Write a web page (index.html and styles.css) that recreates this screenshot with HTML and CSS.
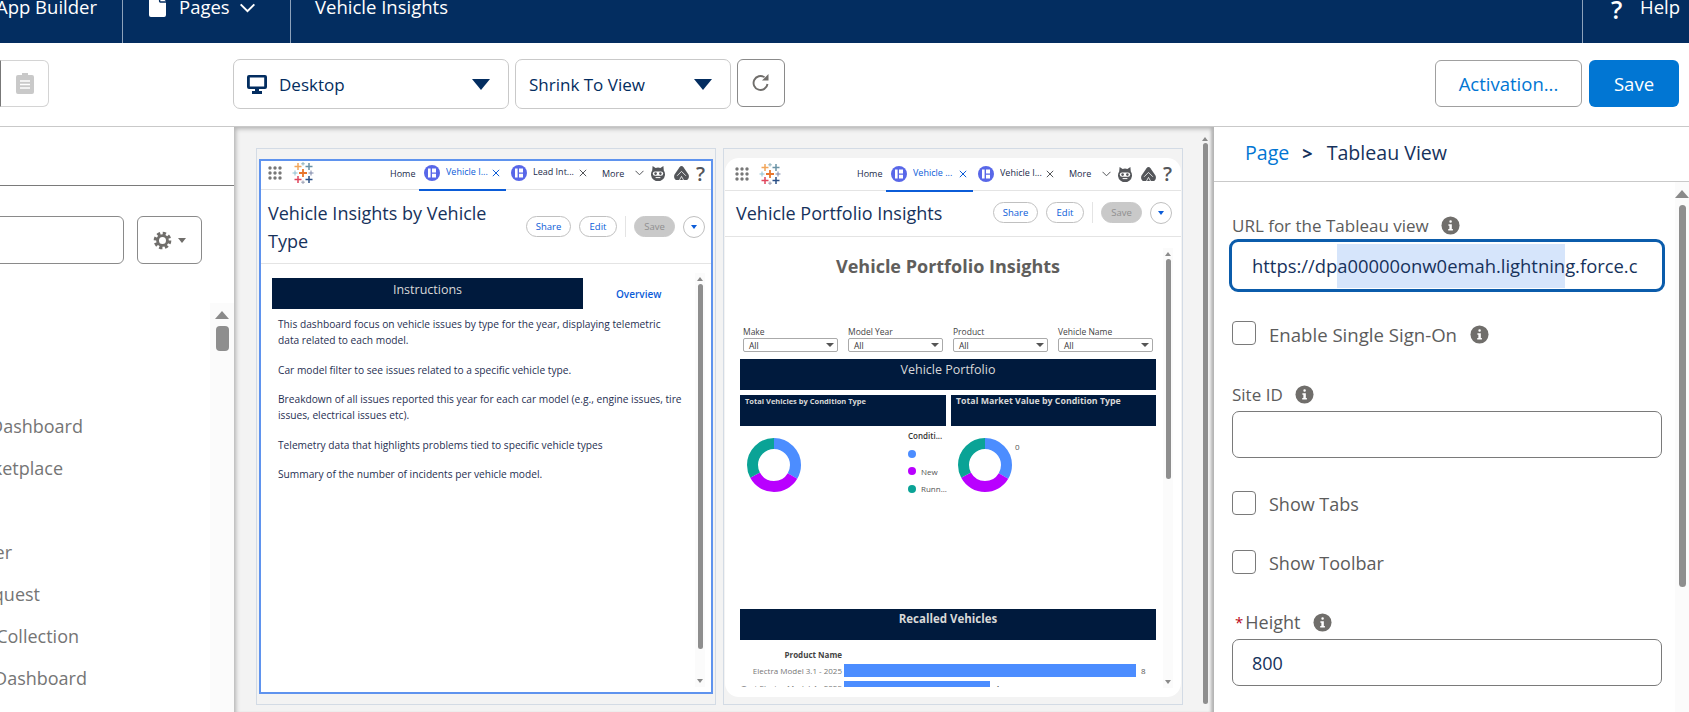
FILE: index.html
```html
<!DOCTYPE html>
<html>
<head>
<meta charset="UTF-8">
<title>Vehicle Insights</title>
<link rel="stylesheet" href="styles.css">
</head>
<body>
<svg class="defs" width="0" height="0">
	<symbol id="i-info" viewBox="0 0 20 20">
		<circle cx="10" cy="10" r="9.5" fill="#706e6b"/>
		<rect x="8.8" y="4.6" width="2.6" height="2.6" rx="1.2" fill="#fff"/>
		<path d="M7.8 8.6h3.6v5h1.1v1.6H7.6v-1.6h1.2v-3.4h-1z" fill="#fff"/>
	</symbol>
	<symbol id="i-tab" viewBox="0 0 16 16">
		<circle cx="8" cy="8" r="8" fill="#5867e8"/>
		<path d="M4 3.4h2.6v9.2H4zM8 3.4h4v4H8zM8 8.8h4v3.8H8z" fill="#fff"/>
	</symbol>
	<symbol id="i-x" viewBox="0 0 8 8">
		<path d="M.8.8l6.4 6.4M7.2.8L.8 7.2" stroke="currentColor" stroke-width="1" fill="none"/>
	</symbol>
	<symbol id="i-cat" viewBox="0 0 16 16">
		<path d="M2.600 1l3 2a7 7 0 0 1 4.800 0l3-2 .4 4.400a7 7 0 1 1-11.600 0z" fill="#54565a"/>
		<rect x="2.800" y="6.400" width="10.400" height="4.400" rx="2.200" fill="#fff"/>
		<circle cx="5.600" cy="8.600" r="1.300" fill="#54565a"/>
		<circle cx="10.400" cy="8.600" r="1.300" fill="#54565a"/>
		<path d="M5.600 12.600h4.800" stroke="#fff" stroke-width="1"/>
	</symbol>
	<symbol id="i-hill" viewBox="0 0 16 16">
		<path d="M8 1c.8 0 1.400.4 2 1.200l4.800 7c1.300 2 .4 5.800-2.200 5.800H3.400c-2.600 0-3.500-3.800-2.200-5.800l4.800-7C6.600 1.400 7.200 1 8 1z" fill="#54565a"/>
		<path d="M3.600 10.800L8 6.400l4.400 4.400M6 15L8 11.400 10 15" stroke="#fff" stroke-width=".8" fill="none"/>
	</symbol>
	<symbol id="i-logo" viewBox="0 0 22 22">
		<path d="M6 1v7M2.5 4.500h7" stroke="#f2a65a" stroke-width="1.500"/>
		<path d="M17 1v7M13.500 4.500h7" stroke="#6a93a6" stroke-width="1.500"/>
		<path d="M11 7v8M7 11h8" stroke="#e8762d" stroke-width="1.800"/>
		<path d="M3 8.500v5M.5 11h5" stroke="#8fc0d0" stroke-width="1"/>
		<path d="M19 8.500v5M16.500 11h5" stroke="#7d86a8" stroke-width="1"/>
		<path d="M6 14v7M2.500 17.500h7" stroke="#e0455c" stroke-width="1.500"/>
		<path d="M17 14v7M13.500 17.500h7" stroke="#2a4f86" stroke-width="1.500"/>
		<path d="M11 0v3.500M9.200 1.800h3.600" stroke="#8fb3bd" stroke-width="1"/>
		<path d="M11 18.500V22M9.200 20.200h3.600" stroke="#9a9fb3" stroke-width="1"/>
	</symbol>
	<symbol id="i-waffle" viewBox="0 0 14 14">
		<g fill="#777">
			<circle cx="2" cy="2" r="1.700"/><circle cx="7" cy="2" r="1.700"/><circle cx="12" cy="2" r="1.700"/>
			<circle cx="2" cy="7" r="1.700"/><circle cx="7" cy="7" r="1.700"/><circle cx="12" cy="7" r="1.700"/>
			<circle cx="2" cy="12" r="1.700"/><circle cx="7" cy="12" r="1.700"/><circle cx="12" cy="12" r="1.700"/>
		</g>
	</symbol>
	<symbol id="i-donut" viewBox="0 0 54 54">
		<g fill="none" stroke-width="11" transform="rotate(-90 27 27)">
			<circle cx="27" cy="27" r="21.500" stroke="#4c8dff" stroke-dasharray="45.030 90.060"/>
			<circle cx="27" cy="27" r="21.500" stroke="#b900ff" stroke-dasharray="45.030 90.060" stroke-dashoffset="-45.030"/>
			<circle cx="27" cy="27" r="21.500" stroke="#0aa396" stroke-dasharray="45.030 90.060" stroke-dashoffset="-90.060"/>
		</g>
	</symbol>
</svg>

<div class="topbar">
	<div class="top-item top-app">App Builder</div>
	<div class="top-item top-pages">
		<svg class="file-icon" viewBox="0 0 18 22"><path d="M2 0h8.500v5.500a1.500 1.500 0 0 0 1.500 1.500h6v13a2 2 0 0 1-2 2H2a2 2 0 0 1-2-2V2a2 2 0 0 1 2-2zM12 0l6 5.500h-6z" fill="#fff"/></svg>
		<span>Pages</span>
		<svg class="chev-icon" viewBox="0 0 18 11"><path d="M1.500 1.500L9 9l7.500-7.500" fill="none" stroke="#fff" stroke-width="2.200"/></svg>
	</div>
	<div class="top-item top-title">Vehicle Insights</div>
	<div class="top-item top-help"><b>?</b><span>Help</span></div>
</div>

<div class="toolbar">
	<div class="clip-btn">
		<svg viewBox="0 0 18 21" width="18" height="21"><path d="M6 0h6v2h4a2 2 0 0 1 2 2v15a2 2 0 0 1-2 2H2a2 2 0 0 1-2-2V4a2 2 0 0 1 2-2h4z" fill="#c9c9c9"/><path d="M4 8h10M4 11.500h10M4 15h10" stroke="#fff" stroke-width="1.300"/></svg>
	</div>
	<div class="drop drop-device">
		<svg class="monitor" viewBox="0 0 20 19"><path d="M2 0h16a2 2 0 0 1 2 2v10a2 2 0 0 1-2 2h-6v2h3v3H5v-3h3v-2H2a2 2 0 0 1-2-2V2a2 2 0 0 1 2-2zm.8 2.500v9h14.400v-9z" fill="#032d60"/></svg>
		<span>Desktop</span>
		<i class="tri"></i>
	</div>
	<div class="drop drop-zoom">
		<span>Shrink To View</span>
		<i class="tri"></i>
	</div>
	<div class="refresh-btn">
		<svg viewBox="0 0 18 20" width="18" height="20"><path d="M15.500 11a7 7 0 1 1-3-6.800" fill="none" stroke="#706e6b" stroke-width="1.900"/><path d="M16.500 1v6.500H10z" fill="#706e6b"/></svg>
	</div>
	<div class="btn-activation">Activation...</div>
	<div class="btn-save">Save</div>
</div>

<div class="workspace">
	<div class="rail">
		<div class="rail-head"></div>
		<div class="rail-search">
			<div class="rail-input"></div>
			<div class="gear-btn">
				<svg viewBox="0 0 20 20" width="19" height="19"><circle cx="10" cy="10" r="7.600" fill="none" stroke="#706e6b" stroke-width="3.400" stroke-dasharray="3.400 2.570"/><circle cx="10" cy="10" r="5.200" fill="none" stroke="#706e6b" stroke-width="3"/></svg>
				<i class="tri-small"></i>
			</div>
		</div>
		<div class="rail-body">
			<div class="rail-list">
				<div class="rail-item end-82">Dashboard</div>
				<div class="rail-item end-62">Marketplace</div>
				<div class="rail-item end-11"></div>
				<div class="rail-item end-11">er</div>
				<div class="rail-item end-38">Request</div>
				<div class="rail-item end-78">Collection</div>
				<div class="rail-item end-86">Dashboard</div>
			</div>
			<div class="vscroll rail-scroll">
				<i class="up"></i>
				<i class="thumb"></i>
			</div>
		</div>
	</div>

	<div class="canvas">
		<div class="frame">
			<div class="card card-selected">
				<div class="sf-nav">
					<svg class="waffle"><use href="#i-waffle"/></svg>
					<svg class="logo"><use href="#i-logo"/></svg>
					<span class="nav-home">Home</span>
					<div class="tab tab-on"><svg class="tab-icon"><use href="#i-tab"/></svg><span class="tab-name">Vehicle I...</span><svg class="tab-x"><use href="#i-x"/></svg></div>
					<div class="tab"><svg class="tab-icon"><use href="#i-tab"/></svg><span class="tab-name">Lead Int...</span><svg class="tab-x"><use href="#i-x"/></svg></div>
					<span class="nav-more">More</span>
					<svg class="nav-chev" viewBox="0 0 9 6"><path d="M.5.800l4 4 4-4" fill="none" stroke="#54565a"/></svg>
					<svg class="nav-cat"><use href="#i-cat"/></svg>
					<svg class="nav-hill"><use href="#i-hill"/></svg>
					<b class="nav-q">?</b>
				</div>
				<div class="sf-head head-tall">
					<h1 class="sf-title title-wrap">Vehicle Insights by Vehicle Type</h1>
					<div class="sf-actions">
						<span class="pill pill-share">Share</span>
						<span class="pill pill-edit">Edit</span>
						<i class="pill-sep"></i>
						<span class="pill pill-save">Save</span>
						<span class="pill-more"><i></i></span>
					</div>
				</div>
				<div class="viz viz-left">
					<div class="viz-main">
						<div class="intro-row">
							<div class="intro-bar">Instructions</div>
							<a class="intro-link">Overview</a>
						</div>
						<p class="note">This dashboard focus on vehicle issues by type for the year, displaying telemetric<br>data related to each model.</p>
						<p class="note">Car model filter to see issues related to a specific vehicle type.</p>
						<p class="note">Breakdown of all issues reported this year for each car model (e.g., engine issues, tire<br>issues, electrical issues etc).</p>
						<p class="note">Telemetry data that highlights problems tied to specific vehicle types</p>
						<p class="note">Summary of the number of incidents per vehicle model.</p>
					</div>
					<div class="vscroll viz-scroll">
						<i class="up"></i>
						<i class="thumb thumb-left"></i>
						<i class="down"></i>
					</div>
				</div>
			</div>
		</div>

		<div class="frame">
			<div class="card card-round">
				<div class="sf-nav">
					<svg class="waffle"><use href="#i-waffle"/></svg>
					<svg class="logo"><use href="#i-logo"/></svg>
					<span class="nav-home">Home</span>
					<div class="tab tab-on"><svg class="tab-icon"><use href="#i-tab"/></svg><span class="tab-name">Vehicle ...</span><svg class="tab-x"><use href="#i-x"/></svg></div>
					<div class="tab"><svg class="tab-icon"><use href="#i-tab"/></svg><span class="tab-name">Vehicle I...</span><svg class="tab-x"><use href="#i-x"/></svg></div>
					<span class="nav-more">More</span>
					<svg class="nav-chev" viewBox="0 0 9 6"><path d="M.5.800l4 4 4-4" fill="none" stroke="#54565a"/></svg>
					<svg class="nav-cat"><use href="#i-cat"/></svg>
					<svg class="nav-hill"><use href="#i-hill"/></svg>
					<b class="nav-q">?</b>
				</div>
				<div class="sf-head head-short">
					<h1 class="sf-title">Vehicle Portfolio Insights</h1>
					<div class="sf-actions">
						<span class="pill pill-share">Share</span>
						<span class="pill pill-edit">Edit</span>
						<i class="pill-sep"></i>
						<span class="pill pill-save">Save</span>
						<span class="pill-more"><i></i></span>
					</div>
				</div>
				<div class="viz viz-right">
					<div class="dash">
						<h2 class="dash-title">Vehicle Portfolio Insights</h2>
						<div class="filters">
							<div class="filter"><label>Make</label><div class="select">All<i></i></div></div>
							<div class="filter"><label>Model Year</label><div class="select">All<i></i></div></div>
							<div class="filter"><label>Product</label><div class="select">All<i></i></div></div>
							<div class="filter"><label>Vehicle Name</label><div class="select">All<i></i></div></div>
						</div>
						<div class="band band-first">Vehicle Portfolio</div>
						<div class="sub-bands">
							<div class="sub-band small">Total Vehicles by Condition Type</div>
							<div class="sub-band">Total Market Value by Condition Type</div>
						</div>
						<div class="charts">
							<div class="chart">
								<svg class="donut"><use href="#i-donut"/></svg>
								<div class="legend">
									<div class="legend-title">Conditi...</div>
									<div class="legend-row"><i class="dot dot-blue"></i></div>
									<div class="legend-row"><i class="dot dot-purple"></i>New</div>
									<div class="legend-row"><i class="dot dot-teal"></i>Runn...</div>
								</div>
							</div>
							<div class="chart">
								<svg class="donut"><use href="#i-donut"/></svg>
								<span class="zero">0</span>
							</div>
						</div>
						<div class="band band-bold">Recalled Vehicles</div>
						<div class="bars">
							<div class="bars-head">Product Name</div>
							<div class="bar-row"><span class="bar-label">Electra Model 3.1 - 2025</span><i class="bar bar-8"></i><span class="bar-val">8</span></div>
							<div class="bar-row"><span class="bar-label">Test Electra Model 4 - 2025</span><i class="bar bar-4"></i><span class="bar-val">4</span></div>
						</div>
					</div>
					<div class="vscroll viz-scroll">
						<i class="up"></i>
						<i class="thumb thumb-right"></i>
						<i class="down"></i>
					</div>
				</div>
			</div>
		</div>

		<div class="vscroll canvas-scroll">
			<i class="up"></i>
			<i class="thumb thumb-canvas"></i>
		</div>
	</div>

	<div class="props">
		<div class="crumbs">
			<a>Page</a>
			<b>&gt;</b>
			<span>Tableau View</span>
		</div>
		<div class="props-body">
			<div class="form">
				<div class="field-label label-url">URL for the Tableau view <svg class="info"><use href="#i-info"/></svg></div>
				<div class="input-focus">https://dp<span class="sel">a00000onw0emah.lightnin</span>g.force.c</div>
				<div class="check check-sso"><i class="box"></i>Enable Single Sign-On <svg class="info"><use href="#i-info"/></svg></div>
				<div class="field-label label-site">Site ID <svg class="info"><use href="#i-info"/></svg></div>
				<div class="input"></div>
				<div class="check check-tabs"><i class="box"></i>Show Tabs</div>
				<div class="check check-tools"><i class="box"></i>Show Toolbar</div>
				<div class="field-label label-height"><em>*</em>Height <svg class="info"><use href="#i-info"/></svg></div>
				<div class="input input-val">800</div>
			</div>
			<div class="vscroll props-scroll">
				<i class="up"></i>
				<i class="thumb thumb-props"></i>
			</div>
		</div>
	</div>
</div>
</body>
</html>
```

FILE: styles.css
```css
html, body {
	margin: 0;
	padding: 0;
	height: 712px;
	overflow: hidden;
}

body {
	font-family: "Open Sans", "Noto Sans", sans-serif;
	color: #032d60;
	background: #fff;
}

.defs {
	display: block;
	height: 0;
}

h1, h2, p {
	margin: 0;
	font-weight: normal;
}

i {
	display: block;
}

/* top blue bar */
.topbar {
	display: flex;
	height: 43px;
	background: #032d60;
	color: #fff;
	font-size: 18.500px;
	line-height: 14px;
	overflow: hidden;
}

.top-item {
	display: flex;
	box-sizing: border-box;
	height: 43px;
	white-space: nowrap;
}

.top-app {
	width: 123px;
	justify-content: flex-end;
	padding-right: 25px;
	border-right: 1px solid #8ea2bb;
}

.top-pages {
	width: 168px;
	padding-left: 26px;
	border-right: 1px solid #8ea2bb;
}

.file-icon {
	width: 17px;
	height: 21px;
	margin-top: -4px;
	margin-right: 13px;
}

.chev-icon {
	width: 17px;
	height: 10px;
	margin-top: 3px;
	margin-left: 9px;
}

.top-title {
	flex: 1;
	padding-left: 24px;
}

.top-help {
	width: 107px;
	padding-left: 28px;
	border-left: 1px solid #8ea2bb;
}

.top-help b {
	font-size: 25px;
	line-height: 19px;
	width: 29px;
	font-weight: 600;
}

/* toolbar */
.toolbar {
	display: flex;
	box-sizing: border-box;
	height: 84px;
	padding: 16px 10px 0 0;
	border-bottom: 1px solid #c9c9c9;
	font-size: 17px;
}

.clip-btn, .refresh-btn {
	display: flex;
	align-items: center;
	justify-content: center;
	box-sizing: border-box;
	height: 48px;
}

.clip-btn {
	width: 49px;
	border: 1px solid #d4d4d4;
	border-left-color: #777;
	border-radius: 0 6px 6px 0;
	margin-top: 1px;
	height: 47px;
}

.drop {
	display: flex;
	align-items: center;
	box-sizing: border-box;
	height: 50px;
	border: 1px solid #c9c9c9;
	border-radius: 7px;
}

.drop-device {
	width: 276px;
	margin-left: 184px;
	padding-left: 13px;
}

.drop-zoom {
	width: 216px;
	margin-left: 6px;
	padding-left: 13px;
}

.monitor {
	width: 20px;
	height: 19px;
	margin-right: 12px;
}

.tri {
	width: 0;
	height: 0;
	margin-left: auto;
	margin-right: 18px;
	border-left: 9px solid transparent;
	border-right: 9px solid transparent;
	border-top: 11px solid #032d60;
}

.refresh-btn {
	width: 48px;
	margin-left: 6px;
	border: 1px solid #8a8a8a;
	border-radius: 6px;
}

.btn-activation, .btn-save {
	display: flex;
	align-items: center;
	justify-content: center;
	box-sizing: border-box;
	height: 47px;
	margin-top: 1px;
	border-radius: 6px;
	font-size: 18.500px;
}

.btn-activation {
	width: 147px;
	margin-left: auto;
	border: 1px solid #a0a0a0;
	color: #0176d3;
}

.btn-save {
	width: 90px;
	margin-left: 7px;
	background: #0176d3;
	color: #fff;
}

/* three columns under the toolbar */
.workspace {
	display: flex;
	height: 585px;
	overflow: hidden;
}

/* left rail */
.rail {
	width: 234px;
	flex: none;
	overflow: hidden;
	color: #757575;
}

.rail-head {
	height: 58px;
	border-bottom: 1px solid #7a7a7a;
}

.rail-search {
	display: flex;
	margin-top: 30px;
}

.rail-input {
	box-sizing: border-box;
	width: 134px;
	height: 48px;
	margin-left: -10px;
	border: 1px solid #8a8a8a;
	border-radius: 6px;
}

.gear-btn {
	display: flex;
	align-items: center;
	justify-content: center;
	gap: 6px;
	box-sizing: border-box;
	width: 65px;
	height: 48px;
	margin-left: 13px;
	border: 1px solid #8a8a8a;
	border-radius: 6px;
}

.tri-small {
	border-left: 4px solid transparent;
	border-right: 4px solid transparent;
	border-top: 5px solid #706e6b;
}

.rail-body {
	display: flex;
	height: 408px;
	margin-top: 39px;
}

.rail-list {
	width: 210px;
	padding-top: 102px;
	overflow: hidden;
}

.rail-item {
	display: flex;
	justify-content: flex-end;
	height: 42px;
	line-height: 42px;
	font-size: 18px;
	white-space: nowrap;
}

.end-11 { width: 12px; }
.end-38 { width: 40px; }
.end-62 { width: 63px; }
.end-78 { width: 79px; }
.end-82 { width: 83px; }
.end-86 { width: 87px; }

/* scrollbars */
.vscroll {
	display: flex;
	flex-direction: column;
	align-items: center;
	flex: none;
	background: #fbfbfb;
}

.vscroll .up {
	border-left: 7px solid transparent;
	border-right: 7px solid transparent;
	border-bottom: 8px solid #8a8a8a;
}

.vscroll .down {
	margin-top: auto;
	border-left: 3px solid transparent;
	border-right: 3px solid transparent;
	border-top: 4px solid #8a8a8a;
}

.thumb {
	background: #8e8e8e;
	border-radius: 4px;
}

.rail-scroll {
	width: 24px;
	padding-top: 8px;
	margin-bottom: -100px;
}

.rail-scroll .thumb {
	width: 13px;
	height: 25px;
	margin-top: 7px;
}

/* preview area */
.canvas {
	display: flex;
	box-sizing: border-box;
	width: 980px;
	flex: none;
	padding: 21px 0 0 22px;
	gap: 7px;
	background: #f3f3f3;
	box-shadow: inset 0 5px 4px -3px #b5b5b5, inset 5px 0 4px -3px #b5b5b5, inset -5px 0 3px -2px #b5b5b5;
}

.frame {
	box-sizing: border-box;
	width: 460px;
	height: 557px;
	padding: 9px 1px;
	border: 1px solid #d3dbe5;
	flex: none;
}

.card {
	box-sizing: border-box;
	height: 539px;
	background: #fff;
	overflow: hidden;
}

.card-selected {
	margin: 1px;
	height: 535px;
	border: 2px solid #5f93ee;
}

.card-round {
	padding-left: 3px;
	padding-right: 3px;
	border-radius: 14px;
}

.sf-nav {
	display: flex;
	align-items: center;
	box-sizing: border-box;
	height: 33px;
	margin-left: -3px;
	margin-right: -3px;
	padding: 3px 0 4px 10px;
	border-bottom: 1px solid #e4e4e4;
	font-size: 9px;
	color: #1b2b4a;
	white-space: nowrap;
}

.card-selected .sf-nav {
	height: 29px;
	margin: 0;
	padding: 0 0 4px 7px;
}

.waffle {
	width: 14px;
	height: 14px;
	flex: none;
}

.logo {
	width: 22px;
	height: 22px;
	flex: none;
	margin-left: 10px;
}

.nav-home {
	width: 23px;
	margin-left: 76px;
}

.tab {
	display: flex;
	align-items: center;
	box-sizing: border-box;
	width: 87px;
	height: 28px;
	flex: none;
	align-self: flex-end;
	margin-bottom: -6px;
	padding: 0 0 6px 5px;
	border-bottom: 2px solid transparent;
}

.nav-home + .tab {
	margin-left: 6px;
}

.tab-on {
	border-bottom-color: #0b5cd8;
	color: #0b5cd8;
}

.tab-icon {
	width: 16px;
	height: 16px;
	flex: none;
}

.tab-name {
	width: 44px;
	margin-left: 6px;
	margin-top: -3px;
	overflow: hidden;
}

.tab-x {
	width: 8px;
	height: 8px;
	flex: none;
	margin-left: 2px;
	color: #54565a;
}

.tab-on .tab-x {
	color: #0b5cd8;
}

.nav-more {
	width: 21px;
	margin-left: 9px;
}

.nav-chev {
	width: 9px;
	height: 6px;
	margin-left: 12px;
	flex: none;
}

.nav-cat {
	width: 16px;
	height: 16px;
	margin-left: 6px;
	flex: none;
}

.nav-hill {
	width: 17px;
	height: 16px;
	margin-left: 7px;
	flex: none;
}

.nav-q {
	margin-left: 6px;
	font-size: 20px;
	font-weight: 600;
	color: #54565a;
}

.sf-head {
	display: flex;
	align-items: center;
	box-sizing: border-box;
	border-bottom: 1px solid #e4e4e4;
}

.card-round .sf-head {
	margin-left: -3px;
	margin-right: -3px;
}

.head-tall {
	height: 74px;
	padding-left: 7px;
	padding-right: 6px;
}

.head-short {
	height: 46px;
	padding: 0 9px 2px 11px;
}

.sf-title {
	font-size: 18px;
	line-height: 28px;
	color: #16325c;
	white-space: nowrap;
}

.title-wrap {
	width: 240px;
	white-space: normal;
}

.sf-actions {
	display: flex;
	align-items: center;
	margin-left: auto;
	font-size: 9.500px;
}

.pill {
	display: flex;
	align-items: center;
	justify-content: center;
	box-sizing: border-box;
	height: 21px;
	border: 1px solid #c0c0c0;
	border-radius: 11px;
	color: #0b5cd8;
}

.pill-share {
	width: 45px;
}

.pill-edit {
	width: 38px;
	margin-left: 8px;
}

.pill-sep {
	width: 1px;
	height: 21px;
	margin-left: 8px;
	background: #e4e4e4;
}

.pill-save {
	width: 41px;
	margin-left: 8px;
	background: #c9c9c9;
	border-color: #c9c9c9;
	color: #8f8f8f;
}

.pill-more {
	display: flex;
	align-items: center;
	justify-content: center;
	box-sizing: border-box;
	width: 22px;
	height: 22px;
	margin-left: 8px;
	border: 1px solid #c0c0c0;
	border-radius: 50%;
}

.pill-more i {
	border-left: 3.500px solid transparent;
	border-right: 3.500px solid transparent;
	border-top: 4px solid #0b5cd8;
}

.viz {
	display: flex;
}

.viz-left {
	height: 423px;
	padding-top: 9px;
	padding-right: 6px;
	box-sizing: border-box;
}

.viz-main {
	flex: 1;
}

.viz-scroll {
	width: 10px;
	height: 414px;
}

.viz-scroll .up {
	margin-top: 4px;
	border-left: 3.500px solid transparent;
	border-right: 3.500px solid transparent;
	border-bottom: 4px solid #8a8a8a;
}

.viz-scroll .down {
	margin-bottom: 4px;
	border-left: 3.500px solid transparent;
	border-right: 3.500px solid transparent;
	border-top: 4px solid #8a8a8a;
}

.viz-scroll .thumb {
	width: 5px;
	margin-top: 3px;
}

.thumb-left {
	height: 365px;
}

.thumb-right {
	height: 220px;
}

.intro-row {
	display: flex;
	align-items: flex-start;
	margin: 5px 0 7px 11px;
	color: #0b5cd8;
}

.intro-bar {
	box-sizing: border-box;
	width: 311px;
	height: 31px;
	padding-top: 3px;
	background: #001a3d;
	color: #d8d8d8;
	font-size: 12.500px;
	line-height: 17px;
	text-align: center;
}

.intro-link {
	margin: 9px 0 0 33px;
	font-size: 10px;
	line-height: 15px;
	font-weight: 600;
}

.note {
	margin: 0 0 13.500px 17px;
	font-size: 10.200px;
	line-height: 16px;
	color: #1f2f52;
	white-space: nowrap;
}

/* embedded dashboard on the right */
.viz-right {
	height: 460px;
	padding-left: 12px;
	padding-right: 6px;
}

.dash {
	width: 416px;
	height: 450px;
	flex: none;
	overflow: hidden;
}

.viz-right .viz-scroll {
	margin-left: 7px;
	margin-top: 11px;
	height: 440px;
}

.dash-title {
	padding-top: 16px;
	font-size: 18px;
	line-height: 26px;
	font-weight: 700;
	color: #605e5c;
	text-align: center;
}

.filters {
	display: flex;
	gap: 10px;
	margin: 47px 0 0 3px;
}

.filter {
	width: 95px;
	font-size: 8.500px;
	color: #444;
}

.filter label {
	display: block;
	line-height: 12px;
}

.select {
	display: flex;
	align-items: center;
	box-sizing: border-box;
	height: 14px;
	padding: 0 3px 0 5px;
	border: 1px solid #aaa;
	border-radius: 2px;
	color: #333;
}

.select i {
	margin-left: auto;
	border-left: 4px solid transparent;
	border-right: 4px solid transparent;
	border-top: 4px solid #555;
}

.band {
	box-sizing: border-box;
	height: 31px;
	background: #001a3d;
	color: #d8d8d8;
	text-align: center;
	font-size: 12.500px;
	line-height: 22px;
}

.band-first {
	margin-top: 7px;
}

.band-bold {
	font-weight: 700;
	font-size: 11.500px;
	line-height: 20px;
}

.sub-bands {
	display: grid;
	grid-template-columns: 206px 205px;
	gap: 5px;
	margin-top: 5px;
}

.sub-band {
	box-sizing: border-box;
	height: 31px;
	padding-left: 5px;
	background: #001a3d;
	color: #d8d8d8;
	font-size: 8.800px;
	line-height: 13px;
	font-weight: 700;
	white-space: nowrap;
}

.sub-band.small {
	font-size: 7.500px;
}

.charts {
	display: grid;
	grid-template-columns: 206px 205px;
	gap: 5px;
	height: 183px;
}

.chart {
	display: flex;
}

.donut {
	width: 54px;
	height: 54px;
	flex: none;
	margin: 12px 0 0 7px;
}

.legend {
	width: 38px;
	margin: 4px 0 0 auto;
	font-size: 8px;
	color: #555;
	white-space: nowrap;
}

.legend-title {
	font-weight: 600;
	line-height: 12px;
	color: #333;
}

.legend-row {
	display: flex;
	align-items: center;
	gap: 5px;
	height: 17.500px;
}

.legend-title + .legend-row {
	margin-top: 3px;
}

.dot {
	width: 8px;
	height: 8px;
	border-radius: 50%;
	flex: none;
}

.dot-blue { background: #4c8dff; }
.dot-purple { background: #b900ff; }
.dot-teal { background: #0aa396; }

.zero {
	margin: 15px 0 0 3px;
	font-size: 8px;
	line-height: 12px;
	color: #555;
}

.bars {
	font-size: 8px;
	color: #777;
	white-space: nowrap;
}

.bars-head {
	width: 102px;
	margin-top: 9px;
	line-height: 12px;
	font-weight: 700;
	color: #444;
	text-align: right;
}

.bar-row {
	display: flex;
	align-items: center;
	height: 17px;
}

.bars-head + .bar-row {
	margin-top: 1px;
}

.bar-label {
	display: block;
	width: 102px;
	flex: none;
	text-align: right;
}

.bar {
	height: 13px;
	margin-left: 2px;
	background: #4c8dff;
}

.bar-8 {
	width: 292px;
}

.bar-4 {
	width: 146px;
}

.bar-val {
	margin-left: 5px;
	color: #555;
}

.canvas-scroll {
	width: 6px;
	margin-left: 12px;
	background: transparent;
	height: 570px;
	margin-top: -14px;
}

.canvas-scroll .up {
	margin-top: 3px;
	border-left: 3px solid transparent;
	border-right: 3px solid transparent;
	border-bottom: 4px solid #8a8a8a;
}

.thumb-canvas {
	width: 5px;
	flex: 1;
	margin-top: 2px;
}

/* right side properties panel */
.props {
	flex: 1;
	min-width: 0;
	overflow: hidden;
	border-top: 1px solid #c9c9c9;
	margin-top: -1px;
	background: #fff;
}

.crumbs {
	display: flex;
	align-items: center;
	box-sizing: border-box;
	height: 55px;
	padding: 0 0 3px 31px;
	border-bottom: 1px solid #c9c9c9;
	font-size: 19.600px;
	color: #16325c;
}

.crumbs a {
	color: #0176d3;
}

.crumbs b {
	margin: 0 14px 0 13px;
	font-size: 18px;
}

.props-body {
	display: flex;
	height: 530px;
}

.form {
	box-sizing: border-box;
	width: 470px;
	padding-left: 18px;
	font-size: 17px;
	color: #5c5c5c;
}

.field-label {
	display: flex;
	align-items: center;
	height: 22px;
	white-space: pre;
}

.info {
	width: 19px;
	height: 19px;
	margin-left: 8px;
}

.label-url {
	margin-top: 32px;
}

.label-site {
	margin-top: 37px;
}

.label-height {
	margin-top: 36px;
	font-size: 18px;
}

.label-height em {
	font-style: normal;
	font-size: 15px;
	color: #ba0517;
	margin: 0 2px 0 3px;
}

.input-focus {
	box-sizing: border-box;
	width: 436px;
	height: 53px;
	margin: 3px 0 0 -3px;
	padding: 2px 0 0 20px;
	border: 3px solid #0b5cab;
	border-radius: 9px;
	font-size: 18.400px;
	line-height: 44px;
	color: #16325c;
	white-space: nowrap;
	overflow: hidden;
}

.sel {
	display: inline-block;
	background: #d6e5fb;
}

.check {
	display: flex;
	align-items: center;
	height: 24px;
	font-size: 18px;
	white-space: pre;
}

.check-sso {
	margin-top: 30px;
	font-size: 18.600px;
}

.box {
	box-sizing: border-box;
	width: 24px;
	height: 24px;
	margin: -2px 13px 0 0;
	border: 1px solid #7a7a7a;
	border-radius: 4px;
}

.check-tabs {
	margin-top: 34px;
}

.check-tools {
	margin-top: 35px;
}

.input {
	box-sizing: border-box;
	width: 430px;
	height: 47px;
	margin-top: 6px;
	padding: 2px 0 0 19px;
	border: 1px solid #7a7a7a;
	border-radius: 7px;
	font-size: 18px;
	line-height: 43px;
	color: #16325c;
}

.props-scroll {
	width: 14px;
	padding-top: 8px;
}

.thumb-props {
	width: 7px;
	height: 382px;
	margin-top: 7px;
}
```
